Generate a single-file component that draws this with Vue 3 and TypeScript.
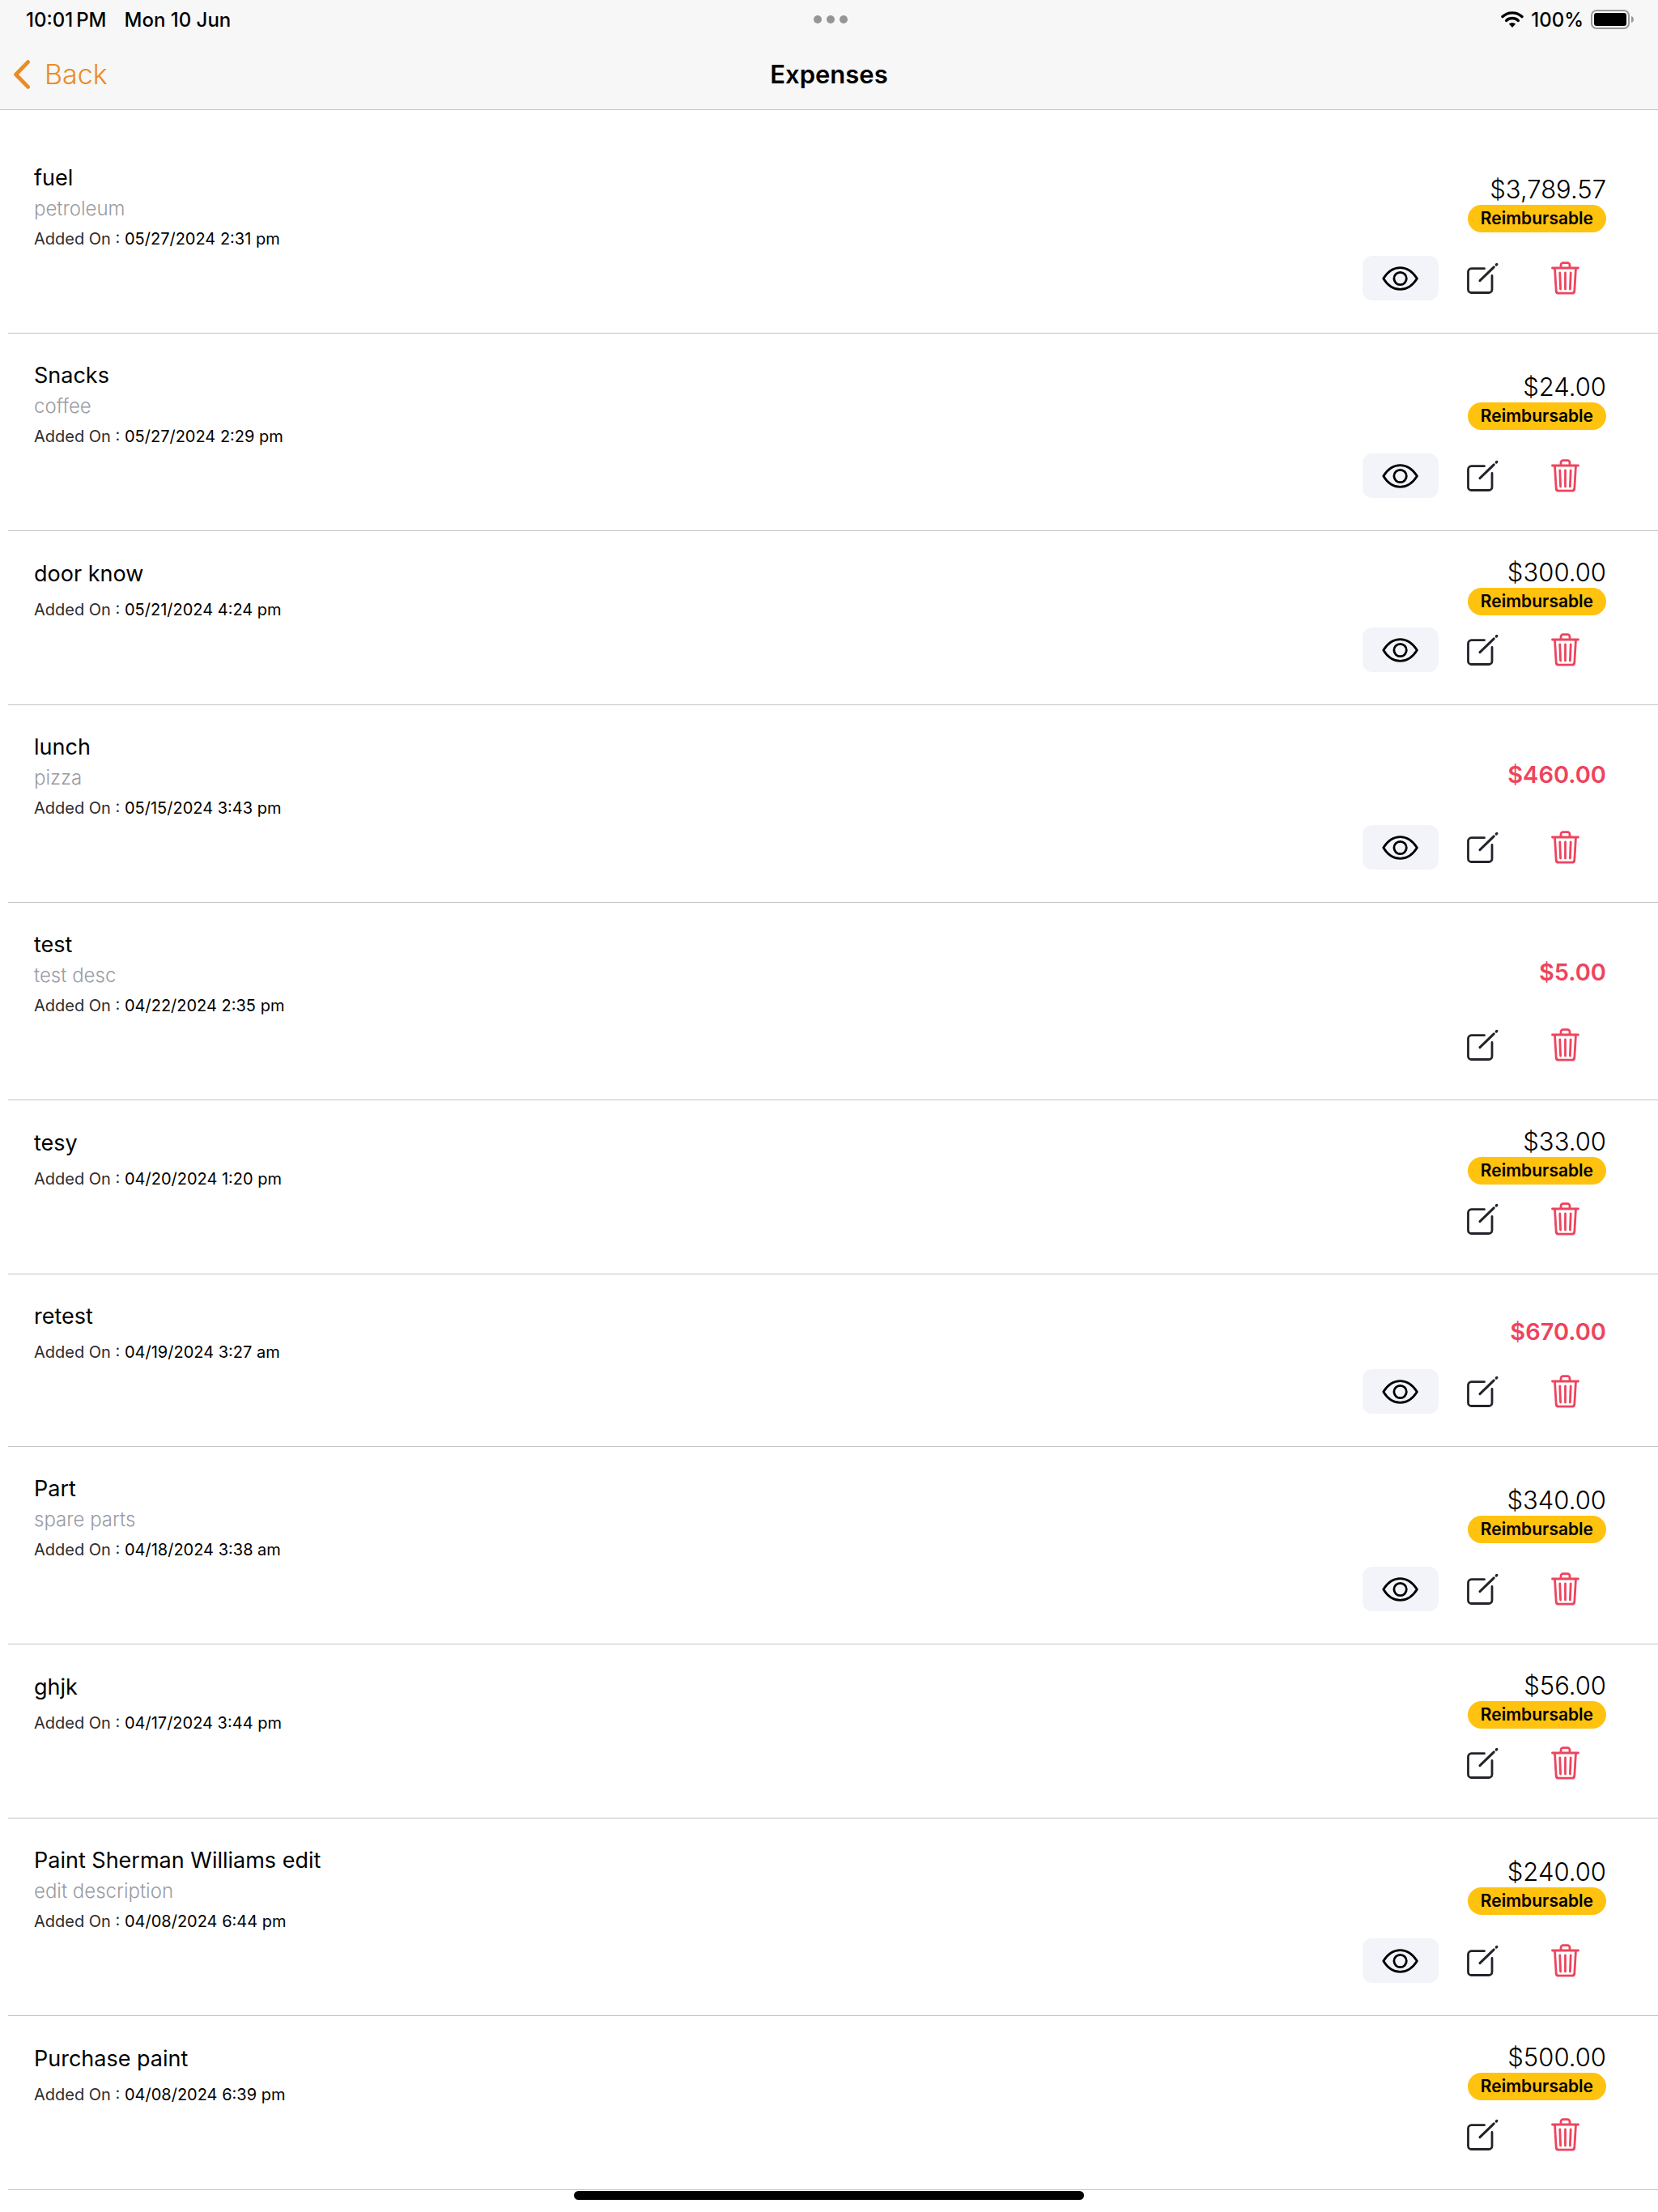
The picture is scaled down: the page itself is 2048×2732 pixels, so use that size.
<script setup lang="ts">
interface Expense {
  title: string
  description?: string
  addedOn: string
  amount: string
  reimbursable: boolean
  hasReceipt: boolean
}

const expenses: Expense[] = [
  { title: 'fuel', description: 'petroleum', addedOn: '05/27/2024 2:31 pm', amount: '$3,789.57', reimbursable: true, hasReceipt: true },
  { title: 'Snacks', description: 'coffee', addedOn: '05/27/2024 2:29 pm', amount: '$24.00', reimbursable: true, hasReceipt: true },
  { title: 'door know', addedOn: '05/21/2024 4:24 pm', amount: '$300.00', reimbursable: true, hasReceipt: true },
  { title: 'lunch', description: 'pizza', addedOn: '05/15/2024 3:43 pm', amount: '$460.00', reimbursable: false, hasReceipt: true },
  { title: 'test', description: 'test desc', addedOn: '04/22/2024 2:35 pm', amount: '$5.00', reimbursable: false, hasReceipt: false },
  { title: 'tesy', addedOn: '04/20/2024 1:20 pm', amount: '$33.00', reimbursable: true, hasReceipt: false },
  { title: 'retest', addedOn: '04/19/2024 3:27 am', amount: '$670.00', reimbursable: false, hasReceipt: true },
  { title: 'Part', description: 'spare parts', addedOn: '04/18/2024 3:38 am', amount: '$340.00', reimbursable: true, hasReceipt: true },
  { title: 'ghjk', addedOn: '04/17/2024 3:44 pm', amount: '$56.00', reimbursable: true, hasReceipt: false },
  { title: 'Paint Sherman Williams edit', description: 'edit description', addedOn: '04/08/2024 6:44 pm', amount: '$240.00', reimbursable: true, hasReceipt: true },
  { title: 'Purchase paint', addedOn: '04/08/2024 6:39 pm', amount: '$500.00', reimbursable: true, hasReceipt: false },
]
</script>

<template>
  <div class="screen">
    <header class="top">
      <div class="status">
        <div class="status-side">
          <span>10:01<span class="meridiem">PM</span></span>
          <span>Mon 10 Jun</span>
        </div>
        <div class="dots"><i></i><i></i><i></i></div>
        <div class="status-side status-end">
          <svg class="wifi" viewBox="0 0 28 20" aria-hidden="true">
            <path d="M2 6.6a17.6 17.6 0 0 1 24 0" fill="none" stroke="#000" stroke-width="3.4" stroke-linecap="round" />
            <path d="M6.6 11.4a11 11 0 0 1 14.8 0" fill="none" stroke="#000" stroke-width="3.4" stroke-linecap="round" />
            <path d="M14 20l-4.2-4.4a6.2 6.2 0 0 1 8.4 0z" />
          </svg>
          <span>100%</span>
          <svg class="battery" viewBox="0 0 54 24" aria-hidden="true">
            <rect x="1" y="1" width="46" height="22" rx="6" fill="none" stroke="#999" stroke-width="2" />
            <rect x="4" y="4" width="40" height="16" rx="3" />
            <path d="M50 8c4 1 4 7 0 8z" fill="#999" />
          </svg>
        </div>
      </div>
      <nav class="nav">
        <button class="back" type="button">
          <svg viewBox="0 0 20 36" aria-hidden="true">
            <path d="M17.6 2.6L2.6 18l15 15.4" fill="none" stroke="currentColor" stroke-width="4.8" stroke-linecap="round" stroke-linejoin="round" />
          </svg>
          <span>Back</span>
        </button>
        <h1>Expenses</h1>
      </nav>
    </header>

    <ul class="list">
      <li v-for="expense in expenses" :key="expense.addedOn" class="row">
        <div class="summary">
          <div class="details">
            <h2>{{ expense.title }}</h2>
            <p v-if="expense.description" class="description">{{ expense.description }}</p>
            <p class="added" :class="{ spaced: !expense.description }">
              Added On : <time>{{ expense.addedOn }}</time>
            </p>
          </div>
          <div class="cost">
            <span class="amount" :class="{ due: !expense.reimbursable }">{{ expense.amount }}</span>
            <span v-if="expense.reimbursable" class="badge">Reimbursable</span>
          </div>
        </div>
        <div class="actions">
          <button v-if="expense.hasReceipt" class="action view" type="button" aria-label="View">
            <svg viewBox="0 0 46 42" aria-hidden="true">
              <path d="M1.800 21C7 12.500 14 7.600 22.600 7.600S38 12.500 43.400 21C38 29.500 31 34.400 22.600 34.400S7 29.500 1.800 21z" stroke-width="2.800" />
              <circle cx="22.600" cy="21" r="7.700" stroke-width="2.800" />
            </svg>
          </button>
          <button class="action edit" type="button" aria-label="Edit">
            <svg viewBox="0 0 46 42" aria-hidden="true">
              <path d="M24.500 8.700H8.500a4 4 0 0 0-4 4V34.500a4 4 0 0 0 4 4H30a4 4 0 0 0 4-4V17.500" stroke-width="2.800" />
              <path d="M19 23.600L36.300 6.900" stroke-width="3" />
              <path d="M39.300 4l.6-.6" stroke-width="3.200" />
            </svg>
          </button>
          <button class="action remove" type="button" aria-label="Delete">
            <svg viewBox="0 0 46 42" aria-hidden="true">
              <path d="M6.500 8H38.500M9.500 8l1.700 28.500a3 3 0 0 0 3 2.700h16.600a3 3 0 0 0 3-2.700L35.500 8M17 8V4.500a2.800 2.800 0 0 1 2.800-2.800h5.400A2.800 2.800 0 0 1 28 4.500v3.500" stroke-width="2.800" />
              <path d="M15.800 14l.8 20M22.500 14v20M29.200 14l-.8 20" stroke-width="2.800" />
            </svg>
          </button>
        </div>
      </li>
    </ul>
    <div class="home-indicator"></div>
  </div>
</template>

<style>
body {
  margin: 0;
  background: #fff;
}
</style>

<style scoped>
.screen {
  min-height: 100vh;
  color: #000;
  font-family: Inter, "Noto Sans", sans-serif;
}

.top {
  border-bottom: 1px solid #c4c4c6;
  background: #f7f7f7;
}

.status {
  display: grid;
  grid-template-columns: 1fr auto 1fr;
  align-items: center;
  height: 48px;
  padding: 0 29px 0 32px;
  font-size: 24px;
  font-weight: 500;
}

.status-side {
  display: flex;
  align-items: center;
  gap: 22px;
}

.status-end {
  justify-content: flex-end;
  gap: 9px;
}

.meridiem {
  margin-left: 4px;
}

.wifi {
  width: 28px;
  height: 20px;
}

.battery {
  width: 54px;
  height: 24px;
}

.dots {
  display: flex;
  gap: 6px;
}

.dots i {
  width: 10px;
  height: 10px;
  border-radius: 50%;
  background: #959595;
}

.nav {
  display: grid;
  grid-template-columns: 1fr auto 1fr;
  align-items: center;
  height: 87px;
}

.back {
  display: flex;
  align-items: center;
  justify-self: start;
  gap: 18px;
  padding: 0 17px;
  border: 0;
  background: none;
  color: #eb8c23;
  font-family: inherit;
  font-size: 34px;
  font-weight: 300;
}

.back svg {
  width: 20px;
  height: 36px;
}

h1 {
  margin: 0;
  font-size: 31px;
  font-weight: 600;
}

.list {
  margin: 0;
  padding: 32px 0 0 10px;
  list-style: none;
}

.row {
  padding: 32px 64px 40px 32px;
  border-bottom: 1px solid #c4c4c6;
}

.summary {
  display: flex;
  align-items: center;
  justify-content: space-between;
  margin-bottom: 8px;
}

h2 {
  margin: 0;
  font-size: 27px;
  font-weight: 400;
  line-height: 40px;
}

p {
  margin: 0;
}

.description {
  color: #9a9ba3;
  font-size: 24px;
  font-weight: 300;
  line-height: 36px;
}

.added {
  margin-top: 6px;
  color: #2c2c30;
  font-size: 20px;
  font-weight: 400;
  line-height: 26px;
}

.added.spaced {
  margin-top: 11px;
}

.added time {
  color: #000;
}

.cost {
  display: flex;
  flex-direction: column;
  align-items: flex-end;
}

.amount {
  font-size: 31px;
  font-weight: 300;
  line-height: 38px;
}

.amount.due {
  color: #ee445e;
  font-size: 29px;
  font-weight: 600;
}

.badge {
  margin-bottom: 7px;
  padding: 0 16px;
  border-radius: 17px;
  background: #ffc20e;
  font-size: 21px;
  font-weight: 600;
  line-height: 34px;
}

.actions {
  display: flex;
  justify-content: flex-end;
  gap: 8px;
  padding-right: 3px;
}

.action {
  display: flex;
  align-items: center;
  justify-content: center;
  width: 94px;
  height: 55px;
  padding: 0;
  border: 0;
  border-radius: 12px;
  background: none;
  color: #000;
}

.action svg {
  width: 46px;
  height: 42px;
  fill: none;
  stroke: currentColor;
  stroke-linecap: round;
  stroke-linejoin: round;
}

.view {
  background: #f3f4f9;
}

.edit {
  color: #22242a;
}

.remove {
  color: #ee445e;
}

.home-indicator {
  position: fixed;
  bottom: 15px;
  left: 50%;
  width: 630px;
  max-width: 60%;
  height: 11px;
  border-radius: 6px;
  background: #000;
  transform: translateX(-50%);
}
</style>
